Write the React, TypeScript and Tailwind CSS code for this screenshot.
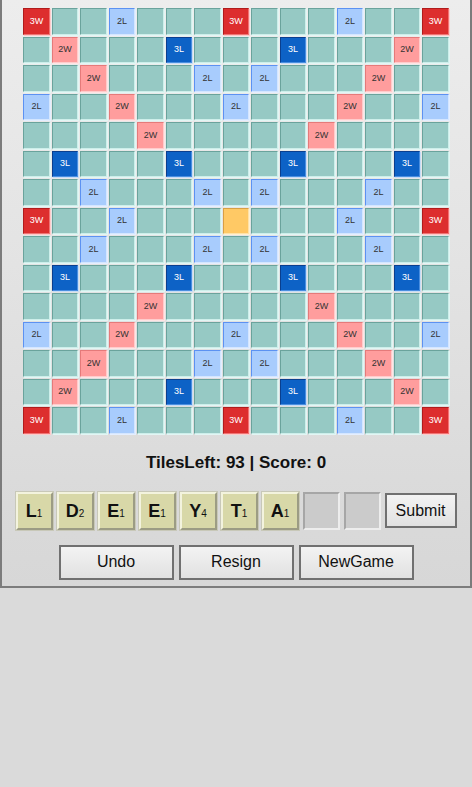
import React from "react";

type Kind = "n" | "dl" | "tl" | "dw" | "tw" | "st";

// standard 15x15 premium layout, top-left quarter mirrored
const quarter: Kind[][] = [
  ["tw", "n", "n", "dl", "n", "n", "n", "tw"],
  ["n", "dw", "n", "n", "n", "tl", "n", "n"],
  ["n", "n", "dw", "n", "n", "n", "dl", "n"],
  ["dl", "n", "n", "dw", "n", "n", "n", "dl"],
  ["n", "n", "n", "n", "dw", "n", "n", "n"],
  ["n", "tl", "n", "n", "n", "tl", "n", "n"],
  ["n", "n", "dl", "n", "n", "n", "dl", "n"],
  ["tw", "n", "n", "dl", "n", "n", "n", "st"],
];

function kindAt(r: number, c: number): Kind {
  const rr = r > 7 ? 14 - r : r;
  const cc = c > 7 ? 14 - c : c;
  return quarter[rr][cc];
}

const cellStyles: Record<Kind, string> = {
  n: "bg-[#96c9c4] border-t border-l border-r border-b border-t-[#6aa39c] border-l-[#6aa39c] border-r-[#cdeeea] border-b-[#cdeeea] shadow-[1px_1px_0_#e2f6f4]",
  dl: "bg-[#a8ccfd] border-t border-l border-r border-b border-t-[#5c92f2] border-l-[#5c92f2] border-r-[#d4e6ff] border-b-[#d4e6ff] shadow-[1px_1px_0_#e4eeff] text-[#333]",
  tl: "bg-[#0d62c6] border-t border-l border-r border-b border-t-[#0a3f8e] border-l-[#0a3f8e] border-r-[#4a8ee0] border-b-[#4a8ee0] shadow-[1px_1px_0_#c4dcf6] text-white",
  dw: "bg-[#ff9d9d] border-t border-l border-r border-b border-t-[#e57a7a] border-l-[#e57a7a] border-r-[#ffcccc] border-b-[#ffcccc] shadow-[1px_1px_0_#ffe4e4] text-[#333]",
  tw: "bg-[#dd2e2e] border-t border-l border-r border-b border-t-[#b01c1c] border-l-[#b01c1c] border-r-[#f07474] border-b-[#f07474] shadow-[1px_1px_0_#ffcaca] text-white",
  st: "bg-[#ffc965] border-t border-l border-r border-b border-t-[#d8a044] border-l-[#d8a044] border-r-[#ffe2a8] border-b-[#ffe2a8] shadow-[1px_1px_0_#fff0d0]",
};

const labels: Record<Kind, string> = {
  n: "",
  dl: "2L",
  tl: "3L",
  dw: "2W",
  tw: "3W",
  st: "",
};

const rack = [
  { l: "L", v: 1 },
  { l: "D", v: 2 },
  { l: "E", v: 1 },
  { l: "E", v: 1 },
  { l: "Y", v: 4 },
  { l: "T", v: 1 },
  { l: "A", v: 1 },
];

function Board() {
  const cells = [];
  for (let r = 0; r < 15; r++) {
    for (let c = 0; c < 15; c++) {
      const k = kindAt(r, c);
      cells.push(
        <div
          key={`${r}-${c}`}
          className={`box-border w-[26.5px] h-[26.5px] flex items-center justify-center text-[9px] leading-none ${cellStyles[k]}`}
        >
          {labels[k]}
        </div>
      );
    }
  }
  return (
    <div className="mx-auto grid grid-cols-[repeat(15,26.5px)] gap-[2px] w-[425.5px]">
      {cells}
    </div>
  );
}

function RackTile({ l, v }: { l: string; v: number }) {
  return (
    <div className="box-border w-[37px] h-[38px] flex items-center justify-center bg-[#d8d8a8] border-2 border-t-[#f3f3de] border-l-[#f3f3de] border-r-[#9c9c84] border-b-[#9c9c84] shadow-[0_0_0_1px_#c8c8b8]">
      <span className="font-bold text-[18px] leading-none text-[#111]">{l}</span>
      <span className="text-[10px] leading-none text-[#111] mt-[7px]">{v}</span>
    </div>
  );
}

function EmptySlot() {
  return (
    <div className="box-border w-[37px] h-[38px] bg-[#cbcbcb] border-2 border-t-[#a6a6a6] border-l-[#a6a6a6] border-r-[#ededed] border-b-[#ededed]" />
  );
}

function Btn({ label, w }: { label: string; w: string }) {
  return (
    <button
      className={`box-border ${w} h-[35px] border-2 border-[#707070] bg-linear-to-b from-[#f3f3f3] to-[#e1e1e1] text-[16px] text-[#111] flex items-center justify-center`}
    >
      {label}
    </button>
  );
}

export default function App() {
  return (
    <div
      className="w-[472px] h-[787px] bg-[#dadada] overflow-hidden"
      style={{ fontFamily: '"Liberation Sans", Arial, sans-serif' }}
    >
      <div className="box-border h-[588px] border-l-2 border-r-2 border-b-2 border-[#7c7c7c] bg-linear-to-b from-[#ededed] to-[#d7d7d7] pt-[8px]">
        <Board />

        <div className="mt-[19px] h-[20px] text-center font-bold text-[17px] leading-[20px] text-[#111]">
          TilesLeft: 93 | Score: 0
        </div>

        <div className="mt-[19px] flex items-center justify-center gap-[4px]">
          {rack.map((t, i) => (
            <RackTile key={i} l={t.l} v={t.v} />
          ))}
          <EmptySlot />
          <EmptySlot />
          <Btn label="Submit" w="w-[72px] h-[34px]" />
        </div>

        <div className="mt-[15px] flex items-center justify-center gap-[5px]">
          <Btn label="Undo" w="w-[115px]" />
          <Btn label="Resign" w="w-[115px]" />
          <Btn label="NewGame" w="w-[115px]" />
        </div>
      </div>
    </div>
  );
}
